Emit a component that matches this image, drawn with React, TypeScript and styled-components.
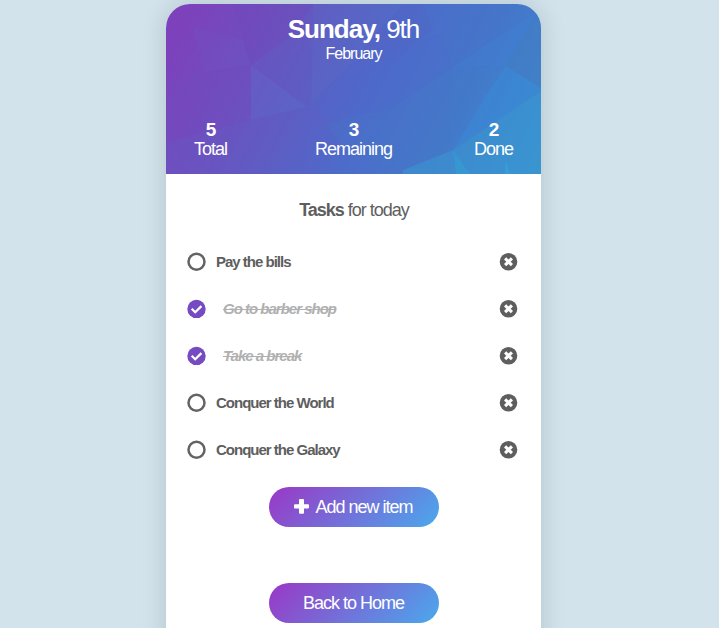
import React from "react";
import styled, { createGlobalStyle } from "styled-components";

const GlobalStyle = createGlobalStyle`
  * { box-sizing: border-box; }
  html { background: #d2e3ec; }
  body {
    margin: 0;
    background: #d2e3ec;
    color: #5e5e5e;
    font-family: "Liberation Sans", Arial, sans-serif;
    letter-spacing: -1px;
  }
`;

const Page = styled.div`
  display: flex;
  justify-content: center;
  height: 628px;
  overflow: hidden;
  padding: 4px 12px 0 0;
`;

const Phone = styled.main`
  width: 375px;
  height: 667px;
  flex: none;
  border-radius: 24px;
  overflow: hidden;
  background: #fff;
  box-shadow: 0 0 24px rgba(0, 20, 30, 0.15);
`;

const Header = styled.header`
  position: relative;
  height: 170px;
  padding-top: 10px;
  color: #fff;
  text-align: center;
  background: linear-gradient(116deg, #7d41bc 5%, #6a53c1 30%, #4d6bca 55%, #4379c9 76%, #3993d0 97%);
`;

const Facets = styled.svg`
  position: absolute;
  inset: 0;
  width: 100%;
  height: 100%;
`;

const HeaderContent = styled.div`
  position: relative;
`;

const DateTitle = styled.h1`
  margin: 0;
  font-size: 26px;
  line-height: 30px;
  font-weight: 400;
`;

const Month = styled.div`
  font-size: 16px;
  line-height: 20px;
`;

const Stats = styled.div`
  display: grid;
  grid-template-columns: 1fr auto 1fr;
  padding: 0 28px;
  margin-top: 55px;
`;

const Stat = styled.div`
  font-size: 18px;
  line-height: 20px;

  &:first-child { justify-self: start; }
  &:last-child { justify-self: end; }

  strong {
    display: block;
    font-size: 19px;
    line-height: 22px;
    margin-bottom: -2px;
  }
`;

const TasksTitle = styled.h2`
  margin: 25px 0 31px;
  padding-left: 1px;
  font-size: 18px;
  line-height: 22px;
  font-weight: 400;
  text-align: center;
`;

const TaskList = styled.ul`
  list-style: none;
  margin: 0;
  padding: 0 23px 0 21px;
  display: grid;
  gap: 27px;
`;

const TaskRow = styled.li`
  display: flex;
  align-items: center;
  height: 20px;
`;

const TaskText = styled.span<{ $done: boolean }>`
  flex: 1;
  font-size: 15px;
  line-height: 20px;
  font-weight: 700;
  margin-left: ${(p) => (p.$done ? 17 : 10)}px;
  color: ${(p) => (p.$done ? "#b0b0b0" : "#5e5e5e")};
  font-style: ${(p) => (p.$done ? "italic" : "normal")};
  text-decoration: ${(p) => (p.$done ? "line-through" : "none")};
`;

const RowIcon = styled.svg`
  display: block;
  flex: none;
  width: 19px;
  height: 20px;
`;

const Actions = styled.div`
  display: flex;
  flex-direction: column;
  align-items: center;
  gap: 56px;
  margin-top: 27px;
`;

const Button = styled.button`
  display: flex;
  align-items: center;
  justify-content: center;
  gap: 6px;
  width: 170px;
  height: 40px;
  padding: 0;
  border: 0;
  border-radius: 20px;
  color: #fff;
  font: 400 18px "Liberation Sans", Arial, sans-serif;
  letter-spacing: -1px;
  background: linear-gradient(135deg, #9b37c5, #4aa9ed);
`;

const PlusIcon = styled.svg`
  display: block;
  width: 15px;
  height: 16px;
`;

const tasks = [
  { text: "Pay the bills", done: false },
  { text: "Go to barber shop", done: true },
  { text: "Take a break", done: true },
  { text: "Conquer the World", done: false },
  { text: "Conquer the Galaxy", done: false },
];

const stats = [
  { value: 5, label: "Total" },
  { value: 3, label: "Remaining" },
  { value: 2, label: "Done" },
];

const facets = [
  { points: "27,23 77,36 85,61 37,68", fill: "#6d62c8", opacity: 0.13 },
  { points: "67,0 107,0 147,0 128,29 85,61 77,36", fill: "#6741ae", opacity: 0.12 },
  { points: "0,76 37,68 85,61 85,116 0,138", fill: "#7050bb", opacity: 0.18 },
  { points: "85,61 128,29 147,0 145,101", fill: "#5c5fc1", opacity: 0.35 },
  { points: "85,61 85,116 141,103", fill: "#5575d2", opacity: 0.28 },
  { points: "0,138 85,116 141,103 141,170 0,170", fill: "#5865c3", opacity: 0.2 },
  { points: "147,0 237,0 194,49 145,101", fill: "#5771c4", opacity: 0.3 },
  { points: "237,0 257,0 266,26 227,60 194,49", fill: "#5463c3", opacity: 0.35 },
  { points: "145,101 194,49 275,30 287,63 227,103 184,130", fill: "#4c6bca", opacity: 0.3 },
  { points: "257,0 371,0 371,8 331,33 287,63 266,26", fill: "#4a70c9", opacity: 0.3 },
  { points: "227,103 287,63 287,146 237,166 184,150 160,120", fill: "#4677c8", opacity: 0.3 },
  { points: "331,33 371,8 340,62 287,63", fill: "#417bd1", opacity: 0.5 },
  { points: "287,63 340,62 320,91 287,146", fill: "#427ac9", opacity: 0.3 },
  { points: "371,8 375,8 375,84 340,62", fill: "#4579c3", opacity: 0.6 },
  { points: "340,62 375,84 375,87 287,146 320,91", fill: "#3b87d5", opacity: 0.6 },
  { points: "287,146 375,87 375,170 237,170 237,166", fill: "#3a94d1", opacity: 0.6 },
  { points: "287,146 304,170 290,170", fill: "#2fadd8", opacity: 0.35 },
  { points: "340,156 344,170 339,170", fill: "#31b1dc", opacity: 0.4 },
];

function Status({ done }: { done: boolean }) {
  return (
    <RowIcon viewBox="0 0 19 20" aria-hidden="true">
      {done ? (
        <>
          <circle cx="9.5" cy="9.9" r="9.2" fill="#744bc0" />
          <path d="M4.7 9.8 8.2 13.2 14.4 7.1" fill="none" stroke="#fff" strokeWidth="2.3" />
        </>
      ) : (
        <circle cx="9.5" cy="9.8" r="8" fill="none" stroke="#636363" strokeWidth="2.5" />
      )}
    </RowIcon>
  );
}

function Remove() {
  return (
    <RowIcon viewBox="0 0 19 20" aria-hidden="true">
      <circle cx="9.5" cy="9.8" r="8.8" fill="#5e5e5e" />
      <path d="M6.1 6.4 12.9 13.2M12.9 6.4 6.1 13.2" stroke="#fff" strokeWidth="3.1" />
    </RowIcon>
  );
}

export default function App() {
  return (
    <>
      <GlobalStyle />
      <Page>
        <Phone>
          <Header>
            <Facets viewBox="0 0 375 170" aria-hidden="true">
              {facets.map((f) => (
                <polygon key={f.points} points={f.points} fill={f.fill} fillOpacity={f.opacity} />
              ))}
            </Facets>
            <HeaderContent>
              <DateTitle><strong>Sunday,</strong> 9th</DateTitle>
              <Month>February</Month>
              <Stats>
                {stats.map((s) => (
                  <Stat key={s.label}><strong>{s.value}</strong>{s.label}</Stat>
                ))}
              </Stats>
            </HeaderContent>
          </Header>
          <TasksTitle><strong>Tasks</strong> for today</TasksTitle>
          <TaskList>
            {tasks.map((t) => (
              <TaskRow key={t.text}>
                <Status done={t.done} />
                <TaskText $done={t.done}>{t.text}</TaskText>
                <Remove />
              </TaskRow>
            ))}
          </TaskList>
          <Actions>
            <Button>
              <PlusIcon viewBox="0 0 15 16" aria-hidden="true">
                <path
                  d="M6 0h3q1 0 1 1v4.2h4q1 0 1 1v2.4q0 1-1 1h-4v4.2q0 1-1 1H6q-1 0-1-1V9.6H1q-1 0-1-1V6.2q0-1 1-1h4V1q0-1 1-1z"
                  fill="#fff"
                />
              </PlusIcon>
              Add new item
            </Button>
            <Button>Back to Home</Button>
          </Actions>
        </Phone>
      </Page>
    </>
  );
}
